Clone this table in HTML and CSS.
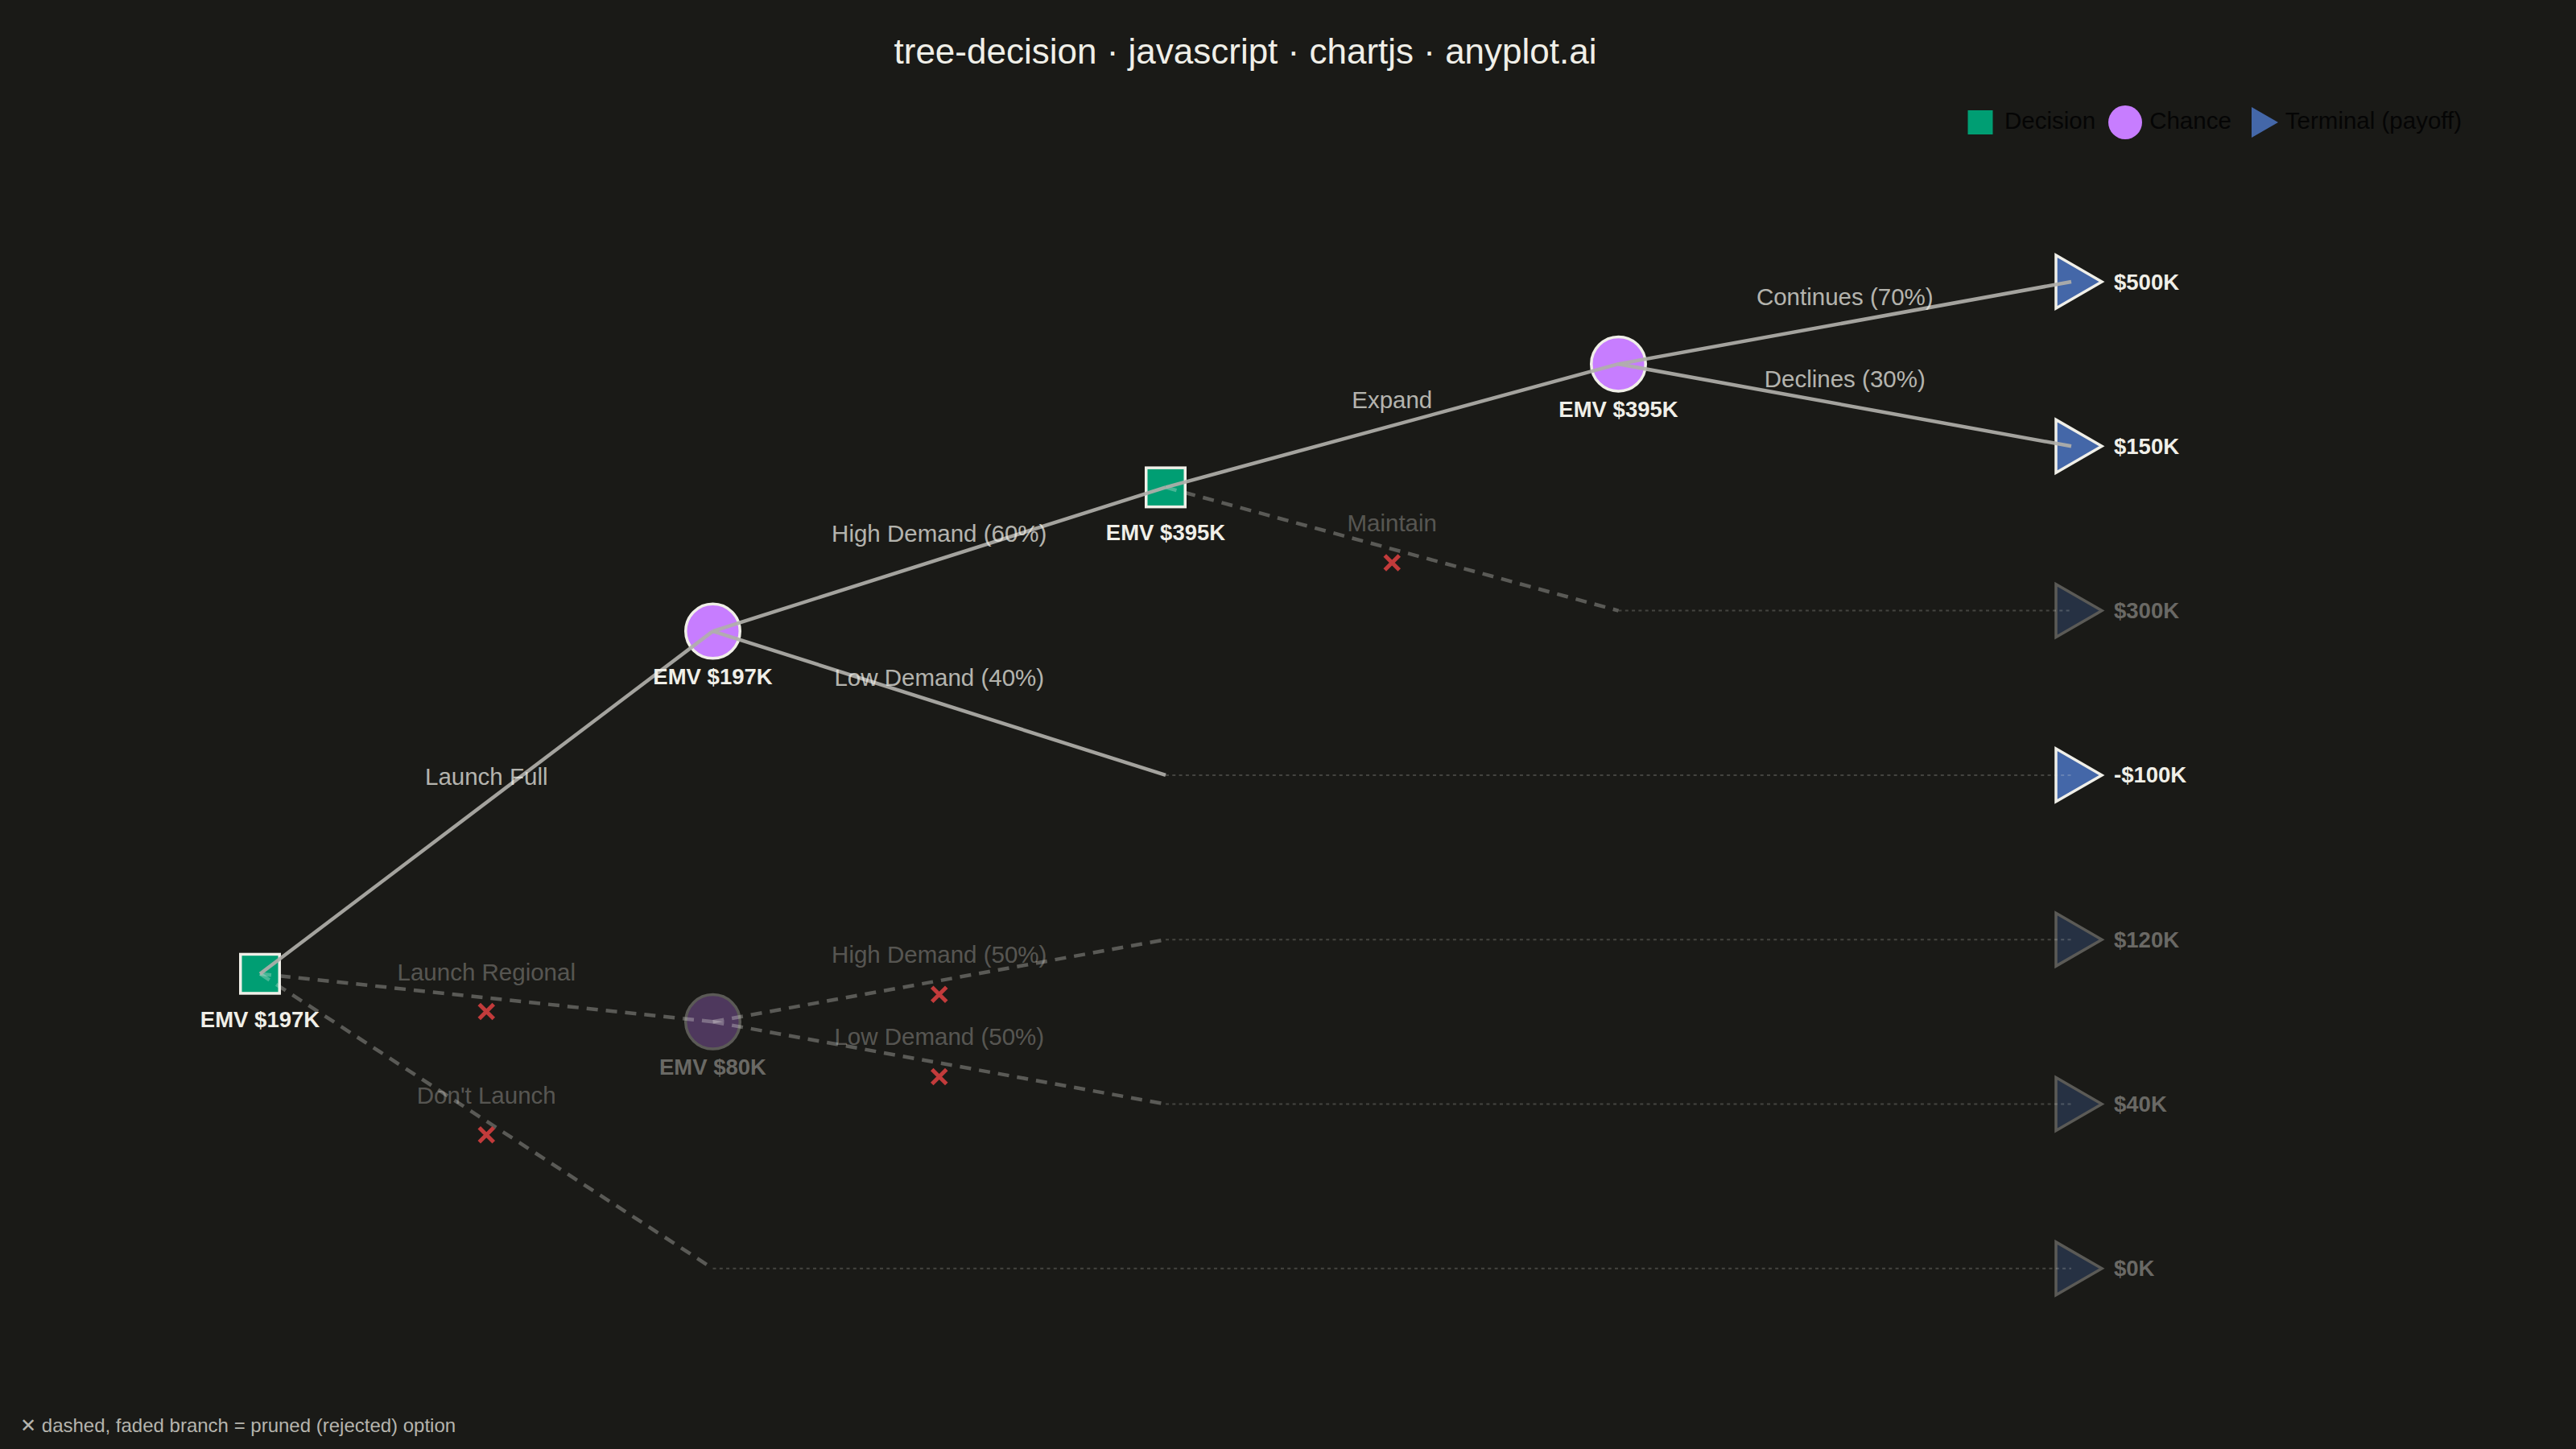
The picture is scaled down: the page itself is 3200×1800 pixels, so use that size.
FILE: index.html
```html
<!DOCTYPE html>
<html lang="en">
<head>
<meta charset="utf-8">
<title>tree-decision · javascript · chartjs · anyplot.ai</title>
<link rel="stylesheet" href="styles.css">
</head>
<body>
<div class="page">
  <svg class="canvas" width="3200" height="1800" viewBox="0 0 3200 1800" xmlns="http://www.w3.org/2000/svg">
    <!-- nodes -->
    <g class="nodes">
      <rect class="decision" x="-24.25" y="-24.25" width="48.5" height="48.5" transform="translate(323,1209.7)"/>
      <circle class="chance" r="33.75" transform="translate(885.5,784.1)"/>
      <circle class="chance faded" r="33.75" transform="translate(885.5,1269.3)"/>
      <rect class="decision" x="-24.25" y="-24.25" width="48.5" height="48.5" transform="translate(1448,605.4)"/>
      <circle class="chance" r="33.75" transform="translate(2010.5,452.2)"/>
      <polygon class="terminal" points="38,0 -19,-32.91 -19,32.91" transform="translate(2573,350)"/>
      <polygon class="terminal" points="38,0 -19,-32.91 -19,32.91" transform="translate(2573,554.3)"/>
      <polygon class="terminal faded" points="38,0 -19,-32.91 -19,32.91" transform="translate(2573,758.6)"/>
      <polygon class="terminal" points="38,0 -19,-32.91 -19,32.91" transform="translate(2573,962.9)"/>
      <polygon class="terminal faded" points="38,0 -19,-32.91 -19,32.91" transform="translate(2573,1167.2)"/>
      <polygon class="terminal faded" points="38,0 -19,-32.91 -19,32.91" transform="translate(2573,1371.5)"/>
      <polygon class="terminal faded" points="38,0 -19,-32.91 -19,32.91" transform="translate(2573,1575.8)"/>
    </g>

    <!-- edges -->
    <g class="edges">
      <line class="edge-dotted" x1="885.5" y1="1575.8" x2="2573" y2="1575.8"/>
      <line class="edge-dotted" x1="1448" y1="962.9" x2="2573" y2="962.9"/>
      <line class="edge-dotted" x1="2010.5" y1="758.6" x2="2573" y2="758.6"/>
      <line class="edge-dotted" x1="1448" y1="1167.2" x2="2573" y2="1167.2"/>
      <line class="edge-dotted" x1="1448" y1="1371.5" x2="2573" y2="1371.5"/>

      <line class="edge-dashed" x1="323" y1="1209.7" x2="885.5" y2="1269.3"/>
      <line class="edge-dashed" x1="323" y1="1209.7" x2="885.5" y2="1575.8"/>
      <line class="edge-dashed" x1="1448" y1="605.4" x2="2010.5" y2="758.6"/>
      <line class="edge-dashed" x1="885.5" y1="1269.3" x2="1448" y2="1167.2"/>
      <line class="edge-dashed" x1="885.5" y1="1269.3" x2="1448" y2="1371.5"/>

      <line class="edge-solid" x1="323" y1="1209.7" x2="885.5" y2="784.1"/>
      <line class="edge-solid" x1="885.5" y1="784.1" x2="1448" y2="605.4"/>
      <line class="edge-solid" x1="885.5" y1="784.1" x2="1448" y2="962.9"/>
      <line class="edge-solid" x1="1448" y1="605.4" x2="2010.5" y2="452.2"/>
      <line class="edge-solid" x1="2010.5" y1="452.2" x2="2573" y2="350"/>
      <line class="edge-solid" x1="2010.5" y1="452.2" x2="2573" y2="554.3"/>
    </g>

    <!-- pruned marks -->
    <g class="marks">
      <path class="prune" d="M-9,-9 L9,9 M9,-9 L-9,9" transform="translate(604.25,1256.5)"/>
      <path class="prune" d="M-9,-9 L9,9 M9,-9 L-9,9" transform="translate(604.25,1409.75)"/>
      <path class="prune" d="M-9,-9 L9,9 M9,-9 L-9,9" transform="translate(1729.25,699)"/>
      <path class="prune" d="M-9,-9 L9,9 M9,-9 L-9,9" transform="translate(1166.75,1235.25)"/>
      <path class="prune" d="M-9,-9 L9,9 M9,-9 L-9,9" transform="translate(1166.75,1337.4)"/>
    </g>

    <!-- edge labels -->
    <g class="edge-labels">
      <text class="edge-label" x="604.25" y="974.9">Launch Full</text>
      <text class="edge-label faded-text" x="604.25" y="1217.5">Launch Regional</text>
      <text class="edge-label faded-text" x="604.25" y="1370.75">Don't Launch</text>
      <text class="edge-label" x="1166.75" y="672.75">High Demand (60%)</text>
      <text class="edge-label" x="1166.75" y="851.5">Low Demand (40%)</text>
      <text class="edge-label" x="1729.25" y="506.8">Expand</text>
      <text class="edge-label faded-text" x="1729.25" y="660">Maintain</text>
      <text class="edge-label" x="2291.75" y="379.1">Continues (70%)</text>
      <text class="edge-label" x="2291.75" y="481.25">Declines (30%)</text>
      <text class="edge-label faded-text" x="1166.75" y="1196.25">High Demand (50%)</text>
      <text class="edge-label faded-text" x="1166.75" y="1298.4">Low Demand (50%)</text>
    </g>

    <!-- node value labels -->
    <g class="node-labels">
      <text class="emv" x="323" y="1275.7">EMV $197K</text>
      <text class="emv" x="885.5" y="850.1">EMV $197K</text>
      <text class="emv faded-node-text" x="885.5" y="1335.3">EMV $80K</text>
      <text class="emv" x="1448" y="671.4">EMV $395K</text>
      <text class="emv" x="2010.5" y="518.2">EMV $395K</text>

      <text class="payoff" x="2626" y="359.5">$500K</text>
      <text class="payoff" x="2626" y="563.8">$150K</text>
      <text class="payoff faded-node-text" x="2626" y="768.1">$300K</text>
      <text class="payoff" x="2626" y="972.4">-$100K</text>
      <text class="payoff faded-node-text" x="2626" y="1176.7">$120K</text>
      <text class="payoff faded-node-text" x="2626" y="1381">$40K</text>
      <text class="payoff faded-node-text" x="2626" y="1585.3">$0K</text>
    </g>
  </svg>

  <header class="head">
    <h1 class="title">tree-decision · javascript · chartjs · anyplot.ai</h1>
    <ul class="legend">
      <li class="legend-item">
        <svg class="legend-sym" width="42" height="42" viewBox="0 0 42 42"><rect class="lg-decision" x="5.5" y="6" width="31" height="30"/></svg>
        <span class="legend-text">Decision</span>
      </li>
      <li class="legend-item">
        <svg class="legend-sym" width="42" height="42" viewBox="0 0 42 42"><circle class="lg-chance" cx="21" cy="21" r="21"/></svg>
        <span class="legend-text">Chance</span>
      </li>
      <li class="legend-item">
        <svg class="legend-sym" width="42" height="42" viewBox="0 0 42 42"><polygon class="lg-terminal" points="43,21 10,2 10,40"/></svg>
        <span class="legend-text">Terminal (payoff)</span>
      </li>
    </ul>
  </header>

  <footer class="note">✕ dashed, faded branch = pruned (rejected) option</footer>
</div>
</body>
</html>
```

FILE: styles.css
```css
html, body {
  margin: 0;
  padding: 0;
  background: #1a1a17;
}

body {
  font-family: "Liberation Sans", Arial, "DejaVu Sans", sans-serif;
  color: #f0efe8;
}

.page {
  position: relative;
  width: 3200px;
  height: 1800px;
  overflow: hidden;
  display: flex;
  flex-direction: column;
  background: #1a1a17;
}

.canvas {
  position: absolute;
  top: 0;
  left: 0;
}

.head {
  position: relative;
  display: flex;
  flex-direction: column;
}

.title {
  margin: 0;
  padding: 38px 106px 0 0;
  font-size: 44px;
  line-height: 52px;
  font-weight: 400;
  text-align: center;
  color: #f0efe8;
}

.legend {
  list-style: none;
  margin: 41px 0 0 0;
  padding: 0 142px 0 0;
  display: flex;
  justify-content: flex-end;
  gap: 15.5px;
}

.legend-item {
  display: flex;
  align-items: flex-start;
  gap: 9.5px;
}

.legend-sym {
  display: block;
  overflow: visible;
  flex: none;
}

.legend-text {
  font-size: 29.5px;
  line-height: 38px;
  color: #050505;
  white-space: nowrap;
}

.lg-decision { fill: #009e73; }
.lg-chance { fill: #c77dff; }
.lg-terminal { fill: #4467a8; }

.note {
  position: relative;
  margin-top: auto;
  padding: 0 0 14px 25px;
  font-size: 24px;
  line-height: 30px;
  color: #b5b4ad;
}

/* diagram */
.decision {
  fill: #009e73;
  stroke: #f0efe8;
  stroke-width: 3.5;
}

.chance {
  fill: #c77dff;
  stroke: #f0efe8;
  stroke-width: 3.5;
}

.terminal {
  fill: #4467a8;
  stroke: #f0efe8;
  stroke-width: 3.5;
  stroke-linejoin: miter;
}

.faded {
  opacity: 0.3;
}

.edge-solid {
  stroke: #b0afaa;
  stroke-opacity: 0.92;
  stroke-width: 4.5;
}

.edge-dashed {
  stroke: rgba(240, 239, 232, 0.3);
  stroke-width: 4.5;
  stroke-dasharray: 14 10;
}

.edge-dotted {
  stroke: rgba(240, 239, 232, 0.2);
  stroke-width: 2;
  stroke-dasharray: 4 4.3;
}

.prune {
  fill: none;
  stroke: #c23b3b;
  stroke-width: 5;
}

.edge-label {
  font-family: "Liberation Sans", Arial, sans-serif;
  font-size: 29.5px;
  text-anchor: middle;
  fill: rgba(240, 239, 232, 0.74);
}

.edge-label.faded-text {
  fill: rgba(240, 239, 232, 0.3);
}

.emv {
  font-family: "Liberation Sans", Arial, sans-serif;
  font-size: 27.5px;
  font-weight: 700;
  text-anchor: middle;
  fill: #f0efe8;
}

.payoff {
  font-family: "Liberation Sans", Arial, sans-serif;
  font-size: 27.5px;
  font-weight: 700;
  text-anchor: start;
  fill: #f0efe8;
}

.faded-node-text {
  fill: rgba(240, 239, 232, 0.38);
}
```
